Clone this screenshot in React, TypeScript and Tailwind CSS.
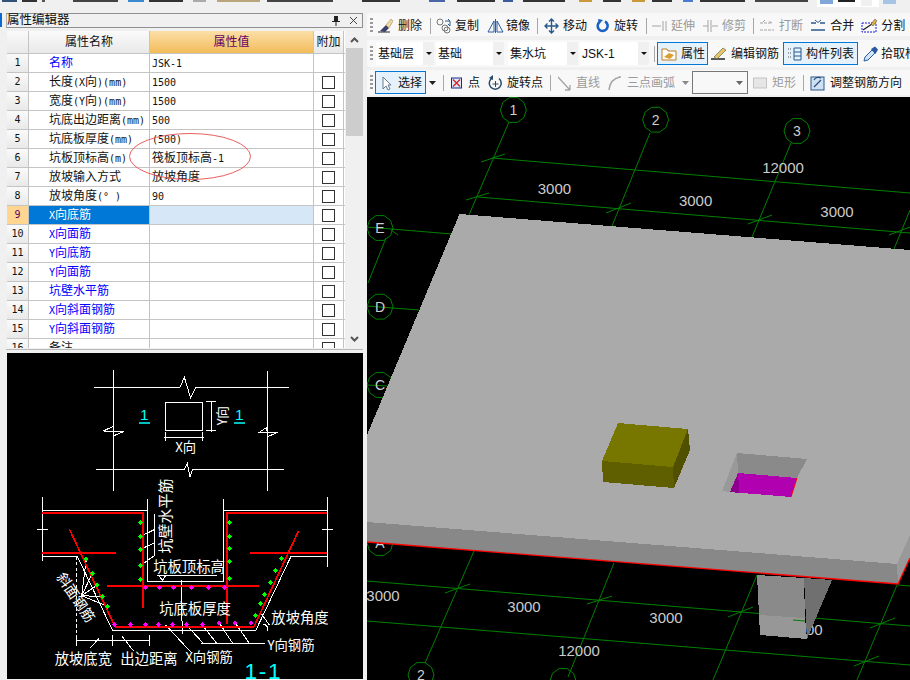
import React from "react";

const TOP_BITS: [number, number, string][] = [
  [2, 15, "#33527a"], [22, 15, "#333"], [42, 3, "#555"], [73, 45, "#444"], [128, 16, "#3a8ad0"], [149, 34, "#333"],
  [193, 13, "#aaa"], [217, 43, "#b9a67a"], [267, 66, "#444"], [362, 38, "#333"], [429, 16, "#4a66a8"], [457, 38, "#333"],
  [503, 10, "#3a5a9a"], [523, 42, "#333"], [579, 13, "#c99a3a"], [603, 18, "#333"], [632, 13, "#c99a3a"], [652, 20, "#333"],
  [683, 10, "#4a7ad0"], [700, 45, "#333"], [755, 53, "#444"],
];

function Latin({ text }: { text: string }) {
  const parts = text.split(/([\x00-\x7f°]+)/).filter(Boolean);
  return (
    <>
      {parts.map((p, i) =>
        /^[\x00-\x7f°]+$/.test(p) ? (
          <span key={i} className="font-['DejaVu_Sans_Mono',monospace] text-[10px]">{p}</span>
        ) : (
          <span key={i}>{p}</span>
        )
      )}
    </>
  );
}

const ROWS: { name: string; value?: string; blue?: boolean; nobox?: boolean; selected?: boolean }[] = [
  { name: "名称", value: "JSK-1", blue: true, nobox: true },
  { name: "长度(X向)(mm)", value: "1500" },
  { name: "宽度(Y向)(mm)", value: "1500" },
  { name: "坑底出边距离(mm)", value: "500" },
  { name: "坑底板厚度(mm)", value: "(500)" },
  { name: "坑板顶标高(m)", value: "筏板顶标高-1" },
  { name: "放坡输入方式", value: "放坡角度" },
  { name: "放坡角度(° )", value: "90" },
  { name: "X向底筋", blue: true, selected: true },
  { name: "X向面筋", blue: true },
  { name: "Y向底筋", blue: true },
  { name: "Y向面筋", blue: true },
  { name: "坑壁水平筋", blue: true },
  { name: "X向斜面钢筋", blue: true },
  { name: "Y向斜面钢筋", blue: true },
  { name: "备注" },
];

function PropertyTable() {
  return (
    <div className="relative ml-[1px] flex h-[317px] w-[357px]">
      <div className="h-full w-[338px] overflow-hidden bg-white text-[12px] text-[#111]">
        <div className="flex h-[23px] border-b border-[#c4c4c4] leading-[22px]">
          <div className="w-[22px] border-r border-[#c4c4c4] bg-gradient-to-b from-[#fafafa] to-[#e9e9e9]" />
          <div className="w-[121px] border-r border-[#c4c4c4] bg-gradient-to-b from-[#fafafa] to-[#e9e9e9] text-center">属性名称</div>
          <div className="w-[164px] border-r border-[#c4c4c4] bg-gradient-to-b from-[#fbdfa6] to-[#f2bc58] text-center text-[#660066]">属性值</div>
          <div className="w-[30px] border-r border-[#c4c4c4] bg-gradient-to-b from-[#fafafa] to-[#e9e9e9] text-center">附加</div>
        </div>
        {ROWS.map((r, i) => (
          <div key={i} className="flex h-[19px] border-b border-[#c4c4c4] leading-[18px]">
            <div className={r.selected
              ? "w-[22px] border-r border-[#c4c4c4] bg-[#ffd590] text-center font-['DejaVu_Sans_Mono',monospace] text-[10px] text-[#660066]"
              : "w-[22px] border-r border-[#c4c4c4] bg-gradient-to-b from-[#fafafa] to-[#e9e9e9] text-center font-['DejaVu_Sans_Mono',monospace] text-[10px]"}>{i + 1}</div>
            <div className={r.selected
              ? "w-[121px] border-r border-[#c4c4c4] bg-[#0078d7] pl-[20px] whitespace-nowrap text-white"
              : r.blue
                ? "w-[121px] border-r border-[#c4c4c4] pl-[20px] whitespace-nowrap text-[#0000ff]"
                : "w-[121px] border-r border-[#c4c4c4] pl-[20px] whitespace-nowrap"}><Latin text={r.name} /></div>
            <div className={r.selected
              ? "w-[164px] border-r border-[#c4c4c4] bg-[#d6e8f7] pl-[2px]"
              : "w-[164px] border-r border-[#c4c4c4] pl-[2px]"}>{r.value ? <Latin text={r.value} /> : null}</div>
            <div className="flex w-[30px] items-center justify-center border-r border-[#c4c4c4]">
              {r.nobox ? null : <div className="h-[13px] w-[13px] border border-[#333] bg-white" />}
            </div>
          </div>
        ))}
      </div>
      <div className="ml-[1px] flex h-full w-[17px] flex-col items-center bg-[#f0f0f0]">
        <svg width="17" height="17" viewBox="0 0 17 17" className="shrink-0"><path d="M5 11 L8.5 7.5 L12 11" stroke="#555" strokeWidth="2" fill="none" /></svg>
        <div className="h-[88px] w-full bg-[#cdcdcd]" />
        <div className="flex-1" />
        <svg width="17" height="17" viewBox="0 0 17 17" className="shrink-0"><path d="M5 6 L8.5 9.5 L12 6" stroke="#555" strokeWidth="2" fill="none" /></svg>
      </div>
      <svg className="pointer-events-none absolute left-[0px] top-[0px]" width="357" height="160">
        <ellipse cx="183" cy="125.5" rx="60.5" ry="23" fill="none" stroke="#e8605f" strokeWidth="1" />
      </svg>
    </div>
  );
}

function CadDetail() {
  const green = [[421,70],[421,112],[421,151],[421,200],[421,241],[688,70],[688,112],[688,148],[688,187],[688,238],[259,180],[277,223],[292,258],[307,293],[322,322],[844,178],[827,214],[811,250],[793,286],[781,313],[766,349]];
  const pink = [[436,265],[478,265],[520,265],[575,265],[625,265],[673,265],[343,376],[391,376],[436,376],[476,376],[517,376],[559,376],[607,376],[658,372],[706,372],[752,372]];
  const dia = (x: number, y: number) => `${x},${y - 8} ${x + 7},${y} ${x},${y + 8} ${x - 7},${y}`;
  return (
    <svg viewBox="21 1062 1068 978" width="356" height="326" className="block font-['Noto_Sans_CJK_SC','Liberation_Sans',sans-serif]">
      <rect x="21" y="1062" width="1068" height="978" fill="#000" />
      <g transform="translate(0 1050)" stroke="#fff" strokeWidth="3" fill="none" shapeRendering="crispEdges">
        <path d="M282 115H540L553 85L572 147L588 115H867" />
        <path d="M288 361H553L562 343L570 385L578 361H852" />
        <path d="M340 63V425M802 66V425" />
        <path d="M310 246L340 232L342 260L372 247Z" />
        <path d="M778 250L800 235L803 263L833 250Z" />
        <rect x="496" y="160" width="112" height="85" />
        <path d="M635 155V250M617 157H647M617 243H647" />
        <path d="M492 264H612M495 248V275M608 248V275" />
        <path d="M127 445V484H443V620M670 620V484H982V445" />
      </g>
      <g transform="translate(0 1050)">
        <text x="557" y="310" fontSize="40" fill="#fff" textAnchor="middle">X向</text>
        <text transform="translate(680 200) rotate(-90)" fontSize="38" fill="#fff" textAnchor="middle">Y向</text>
        <text x="433" y="214" fontSize="46" fill="#00ffff" textAnchor="middle" className="font-['Liberation_Sans',sans-serif]">1</text>
        <text x="718" y="214" fontSize="46" fill="#00ffff" textAnchor="middle" className="font-['Liberation_Sans',sans-serif]">1</text>
        <path d="M417 222H450M702 222H735" stroke="#00ffff" strokeWidth="5" />
        <text transform="translate(514 501) rotate(-90)" fontSize="45" fill="#fff" textAnchor="middle">坑壁水平筋</text>
      </g>
      <g transform="translate(0 1500)" fill="none" shapeRendering="crispEdges">
        <g stroke="#fff" strokeWidth="3">
          <path d="M127 0V185M982 0V205M110 92H145M967 92H1000" />
          <path d="M127 172H232L338 395H767L873 172H982" />
          <path d="M443 0V247H670V0" />
          <path d="M230 172V410" strokeDasharray="10 7" />
          <path d="M228 423H447M228 408V440M338 408V440M447 408V440" />
          <path d="M270 448L297 418M365 410L400 455" />
          <path d="M603 433H795M497 378L575 462M559 378L610 433M607 378L650 433M658 372L698 433M706 372L748 433" />
          <path d="M463 45V170M421 112L463 92M421 151L463 132M421 200L463 170" />
          <path d="M470 230H650M478 230L487 245L497 230M543 240L547 405" />
          <path d="M245 290L259 180M245 290L277 223M245 290L292 258M245 290L307 293M245 290L322 322" />
          <path d="M785 345L808 378M790 375Q806 380 804 396" />
        </g>
        <g stroke="#ff0000" strokeWidth="6">
          <path d="M127 42H430V328M980 42H680V375" />
          <path d="M127 161H347M750 161H980M322 260H777M345 383H762" />
          <path d="M208 90L345 383M762 383L895 97" strokeWidth="5" />
        </g>
        {green.map(([x, y], i) => <polygon key={i} points={dia(x, y)} fill="#00ff00" />)}
        {pink.map(([x, y], i) => <polygon key={i} points={dia(x, y)} fill="#ff00ff" />)}
      </g>
      <g transform="translate(0 1500)" fill="#fff" fontSize="43">
        <text x="567" y="219" textAnchor="middle">坑板顶标高</text>
        <text x="585" y="346" textAnchor="middle">坑底板厚度</text>
        <text x="900" y="371" textAnchor="middle">放坡角度</text>
        <text x="873" y="452" textAnchor="middle" fontSize="40">Y向钢筋</text>
        <text x="250" y="494" textAnchor="middle">放坡底宽</text>
        <text x="447" y="494" textAnchor="middle">出边距离</text>
        <text x="627" y="488" textAnchor="middle" fontSize="40">X向钢筋</text>
        <text transform="translate(215 304) rotate(56)" textAnchor="middle" fontSize="42">斜面钢筋</text>
        <text x="790" y="540" textAnchor="middle" fontSize="68" letterSpacing="5" fill="#00ffff" className="font-['Liberation_Sans',sans-serif]">1-1</text>
      </g>
    </svg>
  );
}

function PlanView() {
  const G = "#008000";
  const circles: [number, number, string][] = [[513.4,110,"1"],[655.6,119.7,"2"],[797,131,"3"],[380,228,"E"],[380,306.7,"D"],[380,385,"C"],[380,543,"A"],[421,675,"2"],[563,681,""]];
  const ticks = "M481 162L505 154M466 200L489 193M606 213L631 203M748 224L772 215M889 235L910 227M445 593L470 584M587 604L612 596M728 617L753 607M870 628L895 618M854 666L879 656M391 230L398 235";
  const lines = "M509 122L469 215M650 133L612 226M791 143L752 237M910 210L894 249M492 158L910 193M478 197L910 233M367 227L452 234M386 238L368 283M367 306L419 310M367 385L388 386M474 551L425 663M614 563L568 677M757 575L713 680M897 585L857 680M898 585L910 586M367 581L910 626M367 621L910 665";
  const nums: [number, number, string][] = [[554.4,194,"3000"],[695.6,206,"3000"],[837,217,"3000"],[783,173,"12000"],[383,601,"3000"],[524,612,"3000"],[666,623,"3000"],[806,635,"3000"],[579,656,"12000"]];
  return (
    <svg viewBox="367 97 543 583" width="543" height="583" className="block font-['Liberation_Sans',sans-serif]">
      <rect x="367" y="97" width="543" height="583" fill="#000" />
      <path d={lines} stroke={G} strokeWidth="1" fill="none" />
      <path d={ticks} stroke={G} strokeWidth="1" fill="none" />
      {circles.map(([x, y, t], i) => (
        <g key={i}>
          <polygon
            points={Array.from({ length: 10 }, (_, k) => `${(x + 13 * Math.cos((k * Math.PI) / 5)).toFixed(1)},${(y + 13 * Math.sin((k * Math.PI) / 5)).toFixed(1)}`).join(" ")}
            fill="none" stroke={G} strokeWidth="1" />
          {t ? <text x={x} y={y + 5} fontSize="14" fill="#cfcfcf" textAnchor="middle">{t}</text> : null}
        </g>
      ))}
      {nums.map(([x, y, t], i) => <text key={i} x={x} y={y} fontSize="15" fill="#cccccc" textAnchor="middle">{t}</text>)}
      <g shapeRendering="crispEdges">
        <polygon points="459.5,214 910,250 910,535 897,564 367,522 367,435" fill="#aaaaaa" />
        <polygon points="367,522 897,564 898,584 367,542" fill="#888888" />
        <polygon points="897,564 910,535 910,558 898,584" fill="#999999" />
        <polygon points="757,575 804,578 805,618 759,615" fill="#8a8a8a" />
        <polygon points="759,615 805,618 807,639 760,635" fill="#979797" />
        <polygon points="804,578 832,580 807,639" fill="#707070" />
        <polygon points="618,423 688,429 673,467 602,461" fill="#777700" />
        <polygon points="602,461 673,467 674,488 603,482" fill="#5f5f00" />
        <polygon points="688,429 690,450 674,488 673,467" fill="#505000" />
        <polygon points="737,453 807,459 797,478 738,473" fill="#8a8a8a" />
        <polygon points="737,453 738,473 730,492 722,491" fill="#999999" />
        <polygon points="738,473 797,478 791,497 730,492" fill="#b000b0" />
        <polygon points="738,473 739.5,493 730,492" fill="#8f008f" />
      </g>
      <path d="M797 478L791 497" stroke="#ff0000" strokeWidth="1" />
      <path d="M367 542L898 584L910 558" stroke="#ff0000" strokeWidth="1.3" fill="none" />
      <path d="M793 620L805 621" stroke={G} strokeWidth="1" />
    </svg>
  );
}

function Sep({ className }: { className: string }) {
  return <div className={`h-[16px] w-[1px] shrink-0 bg-[#a8a8a8] ${className}`} />;
}
function Grip() {
  return <div className="ml-[3px] h-[16px] w-[3px] shrink-0 bg-[repeating-linear-gradient(to_bottom,#9a9a9a_0,#9a9a9a_2px,transparent_2px,transparent_4px)]" />;
}

function Ic({ children, w = 16 }: { children: React.ReactNode; w?: number }) {
  return <svg width={w} height="16" viewBox={`0 0 ${w} 16`} fill="none" className="shrink-0">{children}</svg>;
}

function Tool({ icon, label, className, gray }: { icon: React.ReactNode; label: string; className: string; gray?: boolean }) {
  return (
    <div className={`flex shrink-0 items-center whitespace-nowrap ${gray ? "text-[#9a9a9a]" : "text-[#111]"} ${className}`}>
      {icon}
      <span>{label}</span>
    </div>
  );
}

function Select({ label, className }: { label: string; className: string }) {
  return (
    <div className={`flex h-[23px] shrink-0 items-center bg-white ${className}`}>
      <span className="flex-1 pl-[2px] whitespace-nowrap text-[#111]">{label}</span>
      <div className="flex h-full w-[11px] items-center justify-center bg-[#f0f0f0]">
        <div className="h-0 w-0 border-x-[3px] border-t-[3px] border-x-transparent border-t-[#111]" />
      </div>
    </div>
  );
}

function Arrow({ className, color }: { className: string; color: string }) {
  return (
    <svg width="7" height="4" viewBox="0 0 7 4" className={`shrink-0 ${className}`}><path d="M0 0H7L3.5 4Z" fill={color} /></svg>
  );
}

function Toolbars() {
  const gr = "#a4a4a4";
  return (
    <div className="flex flex-col text-[12px] font-['Liberation_Sans','Noto_Sans_CJK_SC',sans-serif]">
      <div className="ml-[2px] flex h-[23px] items-center overflow-hidden rounded-l-[3px] bg-[#f8f8f8] pt-[2px]">
        <Grip />
        <Tool className="ml-[5px] gap-[5px] text-[#111]" label="删除" icon={<Ic w={15}><path d="M0 14H12" stroke="#222" /><path d="M2 13L8 7L11 10L7 14Z" fill="#3a3f6a" /><path d="M8 7L13 1L15 3L11 10Z" fill="#e8d9a8" stroke="#b08a4a" strokeWidth=".6" /></Ic>} />
        <Sep className="ml-[8px]" />
        <Tool className="ml-[5px] gap-[2px]" label="复制" icon={<Ic w={17}><circle cx="4" cy="4" r="3" stroke="#777" /><circle cx="11" cy="12" r="3" stroke="#777" /><circle cx="9" cy="10" r="3" stroke="#777" /><path d="M9 3H14V8M14 3L12 1M14 8L12 6" stroke="#2a5a8a" /></Ic>} />
        <Tool className="ml-[8px] gap-[2px]" label="镜像" icon={<Ic w={17}><path d="M8.5 1V15" stroke="#555" /><path d="M7 3V14H1Z" stroke="#2a5aa0" /><path d="M10 3V14H16Z" stroke="#2a5aa0" /></Ic>} />
        <Sep className="ml-[7px]" />
        <Tool className="ml-[6px] gap-[4px]" label="移动" icon={<Ic w={15}><path d="M7.5 1V15M1 8H14M5 3.5L7.5 1L10 3.5M5 12.5L7.5 15L10 12.5M3.5 5.5L1 8L3.5 10.5M11.500 5.500L14 8L11.500 10.500" stroke="#2a5a8a" strokeWidth="1.4" /></Ic>} />
        <Tool className="ml-[9px] gap-[4px]" label="旋转" icon={<Ic w={14}><path d="M9 3.500A5 5 0 1 1 4 3.700" stroke="#1b62c4" strokeWidth="2.600" /><path d="M2 1L7 2L3 6Z" fill="#1b62c4" /></Ic>} />
        <Sep className="ml-[8px]" />
        <Tool gray className="ml-[5px] gap-[4px]" label="延伸" icon={<Ic w={15}><path d="M0 8H9M11 3V13M14 3V13" stroke={gr} /></Ic>} />
        <Tool gray className="ml-[8px] gap-[4px]" label="修剪" icon={<Ic w={15}><path d="M0 8H5M9 8H15" stroke={gr} /><path d="M5 2V14M8 2V14" stroke={gr} /></Ic>} />
        <Sep className="ml-[7px]" />
        <Tool gray className="ml-[6px] gap-[5px]" label="打断" icon={<Ic w={14}><path d="M0 5H12M12 5L9 3M0 12H14M5 2L2 5" stroke={gr} strokeDasharray="3 1" /></Ic>} />
        <Tool className="ml-[8px] gap-[5px]" label="合并" icon={<Ic w={14}><path d="M0 5H5M9 5H14M0 12H14" stroke="#2a5a8a" strokeWidth="1.4" /><path d="M4 2L7 4.500L10 2" stroke="#2a5a8a" /></Ic>} />
        <Tool className="ml-[7px] gap-[4px]" label="分割" icon={<Ic w={16}><path d="M1 5H15V14H1Z" stroke="#1a1ae0" strokeDasharray="2 1" /><path d="M2 12L14 4" stroke="#222" strokeWidth="1.300" /><path d="M10 6L14 1L16 3L12 8Z" fill="#e3b23c" stroke="#444" strokeWidth=".5" /></Ic>} />
      </div>
      <div className="ml-[2px] mt-[4px] flex h-[27px] items-center overflow-hidden rounded-l-[3px] bg-[#f8f8f8]">
        <Grip />
        <Select className="ml-[3px] w-[58px]" label="基础层" />
        <Select className="ml-[2px] w-[68px]" label="基础" />
        <Select className="ml-[4px] w-[70px]" label="集水坑" />
        <Select className="ml-[2px] w-[69px]" label="JSK-1" />
        <Sep className="ml-[5px]" />
        <div className="ml-[2px] flex h-[23px] w-[51px] shrink-0 items-center border border-[#0078d7] bg-[#e5f1fb] pl-[3px] text-[#111]">
          <Ic><path d="M1 3H6L7 5H15V14H1Z" fill="#fff" stroke="#c07a20" /><path d="M3 11L8 7L13 9L9 13Z" fill="#d9a030" /></Ic>
          <span className="ml-[4px]">属性</span>
        </div>
        <Tool className="ml-[3px] gap-[4px]" label="编辑钢筋" icon={<Ic><path d="M0 13H14" stroke="#222" strokeWidth="1.300" /><path d="M3 11L12 2L15 4L6 13Z" fill="#e6c768" stroke="#554" strokeWidth=".6" /></Ic>} />
        <div className="ml-[4px] flex h-[23px] w-[75px] shrink-0 items-center border border-[#0078d7] bg-[#e5f1fb] pl-[3px] text-[#111]">
          <Ic><path d="M1 3H4M1 7H4M1 11H4" stroke="#555" strokeDasharray="1 1" /><path d="M7 2H14V14H7ZM7 6H14M7 10H14" stroke="#2a5a8a" /></Ic>
          <span className="ml-[3px] whitespace-nowrap">构件列表</span>
        </div>
        <Tool className="ml-[5px] gap-[3px]" label="拾取构件" icon={<Ic w={15}><path d="M1 15L2 11L9 4L12 7L5 14Z" fill="#cfe4f7" stroke="#2a5aa0" /><path d="M8 3L12 0.500L15 3.500L12.500 8Z" fill="#2a5aa0" /></Ic>} />
      </div>
      <div className="ml-[2px] mt-[3px] flex h-[25px] items-center overflow-hidden rounded-l-[3px] bg-[#f8f8f8]">
        <Grip />
        <div className="ml-[2px] flex h-[23px] w-[51px] shrink-0 items-center border border-[#0078d7] bg-[#e5f1fb] pl-[6px] text-[#111]">
          <Ic w={9}><path d="M1 2V14L4 11L6 15L8 14L6 10H9Z" fill="#fff" stroke="#6a7a90" /></Ic>
          <span className="ml-[7px]">选择</span>
        </div>
        <Arrow className="ml-[3px]" color="#222" />
        <Sep className="ml-[7px]" />
        <Tool className="ml-[7px] gap-[6px]" label="点" icon={<Ic w={11}><rect x="0.500" y="3" width="10" height="10" stroke="#1a2a90" fill="#dfe6f5" /><path d="M2 4.500L9 11.500M9 4.500L2 11.500" stroke="#d02020" strokeWidth="1.200" /></Ic>} />
        <Tool className="ml-[8px] gap-[4px]" label="旋转点" icon={<Ic w={15}><path d="M11 3.500A6 6 0 1 1 3.500 3.500" stroke="#2a4a6a" strokeWidth="1.500" /><path d="M5 0L5 5L1 3Z" fill="#2a4a6a" /><path d="M7.500 6V12M4.500 9H10.500" stroke="#2a4a6a" /></Ic>} />
        <Sep className="ml-[7px]" />
        <Tool gray className="ml-[7px] gap-[5px]" label="直线" icon={<Ic w={13}><path d="M0 2L12 15M12 15V10M12 15H7" stroke={gr} strokeWidth="1.300" /></Ic>} />
        <Tool gray className="ml-[8px] gap-[6px]" label="三点画弧" icon={<Ic w={13}><path d="M1 15Q2 4 12 2" stroke={gr} strokeWidth="1.500" /><circle cx="12" cy="2" r="1" fill={gr} /></Ic>} />
        <Arrow className="ml-[7px]" color="#8a8a8a" />
        <div className="ml-[3px] flex h-[23px] w-[56px] shrink-0 items-center justify-end border border-[#777] bg-[#f8f8f8] pr-[4px]">
          <Arrow className="" color="#666" />
        </div>
        <Tool gray className="ml-[5px] gap-[5px]" label="矩形" icon={<Ic w={14}><rect x="0.500" y="3" width="13" height="10" fill="#e6e6e6" stroke="#c4c4c4" /></Ic>} />
        <Sep className="ml-[7px]" />
        <Tool className="ml-[6px] gap-[5px]" label="调整钢筋方向" icon={<Ic w={15}><rect x="1" y="2" width="13" height="13" fill="#cfe0f2" stroke="#2a5a8a" /><path d="M4 12L11 5M4 5A5 5 0 0 1 11 3" stroke="#2a4a7a" strokeWidth="1.200" /></Ic>} />
      </div>
    </div>
  );
}

export default function App() {
  return (
    <div className="flex h-[680px] w-[910px] flex-col overflow-hidden bg-[#f0f0f0] font-['Liberation_Sans','Noto_Sans_CJK_SC',sans-serif]">
      <div className="relative flex h-[13px] shrink-0 items-start">
        {TOP_BITS.map(([x, w, c], i) => (
          <div key={i} className="absolute top-[0px] h-[2px]" style={{ left: x, width: w, background: c }} />
        ))}
        <div className="absolute left-[817px] top-[0px] flex h-[7px] w-[62px] items-start bg-white">
          <div className="ml-[3px] h-[4px] w-[13px] bg-[#7fa8d8]" />
          <div className="ml-[5px] h-[2px] w-[17px] bg-[#222]" />
          <div className="ml-[6px] h-[6px] w-[11px] bg-[#f0f0f0]" />
        </div>
        <div className="absolute left-[883px] top-[0px] h-[4px] w-[13px] bg-[#a8c4e4]" />
      </div>
      <div className="flex min-h-0 flex-1">
        <div className="flex w-[365px] shrink-0 flex-col">
          <div className="flex h-[14px] shrink-0">
            <div className="h-full w-[2px] bg-[#0a6ad0]" />
            <div className="ml-[4px] flex h-[15px] w-[357px] items-center border border-[#8f8f8f] border-l-[#b0b0b0] bg-[#f0f0f0] pb-[1px] text-[12.5px] leading-[13px] text-[#111]">
              <span className="flex-1">属性编辑器</span>
              <svg width="10" height="11" viewBox="0 0 10 11" className="mr-[8px]"><path d="M3 1H7V6H9V7H5.500V11H4.500V7H1V6H3Z" fill="#222" /></svg>
              <svg width="9" height="9" viewBox="0 0 9 9" className="mr-[4px]"><path d="M1 1L8 8M8 1L1 8" stroke="#444" /></svg>
            </div>
          </div>
          <div className="h-[4px] shrink-0" />
          <div className="ml-[6px] flex flex-col">
            <PropertyTable />
          </div>
          <div className="ml-[6px] mt-[1px] h-[1px] w-[357px] shrink-0 bg-[#b8b8b8]" />
          <div className="ml-[7px] mt-[3px]">
            <CadDetail />
          </div>
        </div>
        <div className="flex w-[545px] shrink-0 flex-col">
          <Toolbars />
          <div className="ml-[2px] mt-[2px] min-h-0 flex-1">
            <PlanView />
          </div>
        </div>
      </div>
    </div>
  );
}
